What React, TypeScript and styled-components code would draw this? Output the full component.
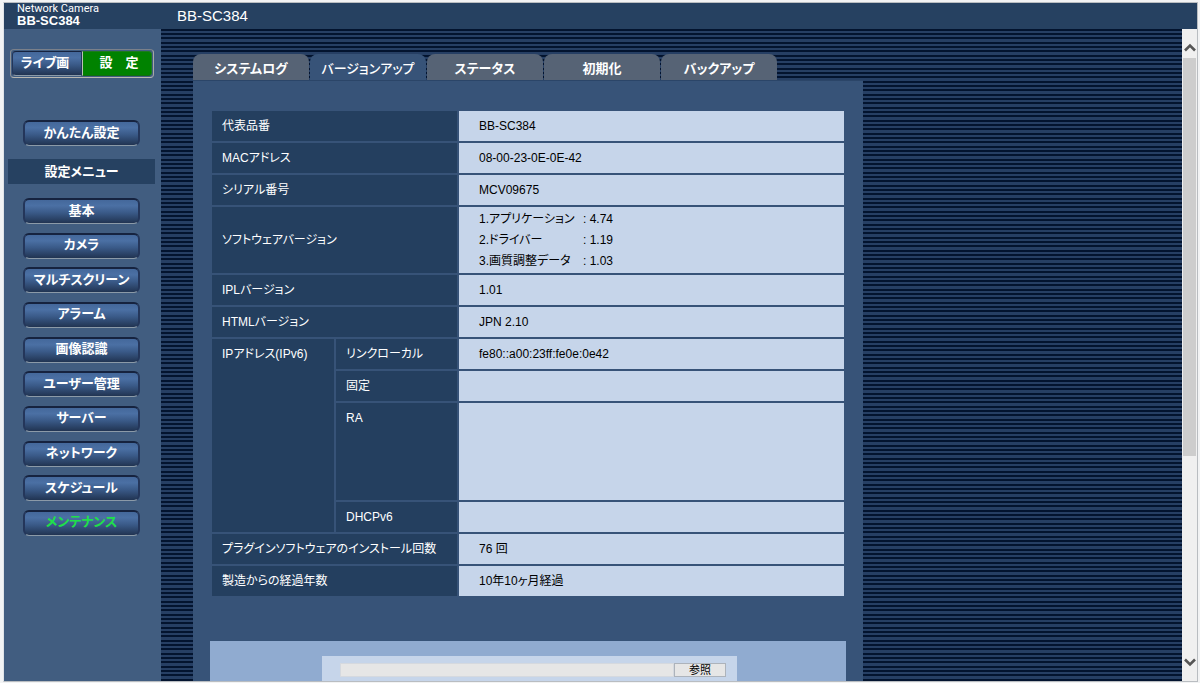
import React from "react";
import styled, { createGlobalStyle, css } from "styled-components";

const GlobalStyle = createGlobalStyle`
  *, *::before, *::after { box-sizing: border-box; }
  body {
    margin: 0;
    background: #f2f3f4;
    color: #fff;
    font: 12px/18px "Liberation Sans", "Noto Sans CJK JP", sans-serif;
    font-feature-settings: "palt";
  }
  button, input { font: inherit; font-feature-settings: inherit; }
`;

const Frame = styled.div`
  display: flex;
  flex-direction: column;
  height: 100vh;
  padding: 2px 2px 1px 3px;
`;

const Browser = styled.div`
  flex: 1;
  min-height: 0;
  display: flex;
  flex-direction: column;
  border: 1px solid #b9bdc1;
  border-left-color: #dfe3e8;
`;

const Header = styled.header`
  flex: none;
  display: flex;
  height: 26px;
  background: #264161;
`;

const Brand = styled.div`
  width: 157px;
  padding-left: 13px;
  font-family: Roboto, "Liberation Sans", sans-serif;
  font-size: 11px;
  line-height: 11px;
`;

const BrandModel = styled.strong`
  display: block;
  font-family: "Liberation Sans", sans-serif;
  font-size: 13px;
  line-height: 13px;
`;

const DeviceName = styled.h1`
  margin: 0;
  padding-left: 16px;
  font-size: 15px;
  font-weight: 400;
  line-height: 26px;
`;

const Body = styled.div`
  flex: 1;
  min-height: 0;
  display: flex;
`;

const Sidebar = styled.nav`
  flex: none;
  width: 157px;
  padding: 20px 6px 0 4px;
  background: #415d80;
  overflow: hidden;
`;

const raised = css`
  border: 1px solid;
  border-color: #16233f #24365a #8b9aa8 #24365a;
  background: linear-gradient(#44689b, #4b70a4 25%, #3a5a88 55%, #213452);
`;

const ModeSwitch = styled.div`
  display: grid;
  grid-template-columns: 1fr 1fr;
  height: 29px;
  margin: 0 1px 42px 2px;
  padding: 1px;
  border: 1px solid;
  border-color: #7a808a #a9a9a4 #b9b7b0 #8e9298;
  border-radius: 4px;
`;

const ModeButton = styled.button<{ $active?: boolean }>`
  padding: 0 4px 2px 0;
  color: #fff;
  font-size: 13px;
  font-weight: 700;
  line-height: 20px;
  white-space: pre;
  ${raised}
  border-radius: 4px 0 0 4px;
  ${(p) =>
    p.$active &&
    css`
      padding: 0 0 2px 4px;
      background: #008200;
      border-color: #1d7a1d #1d7a1d #0f6d0f #b9c3b4;
      border-radius: 0 4px 4px 0;
    `}
`;

const MenuButton = styled.button<{ $active?: boolean }>`
  display: block;
  width: 117px;
  height: 26px;
  margin: 0 auto;
  padding: 0 0 2px;
  color: ${(p) => (p.$active ? "#1fe04a" : "#fff")};
  font-size: 13px;
  font-weight: 700;
  line-height: 20px;
  ${raised}
  border-width: 2px 2px 1px;
  border-radius: 6px;
`;

const MenuTitle = styled.h2`
  margin: 13px 0 14px;
  background: #264161;
  font-size: 13px;
  font-weight: 700;
  line-height: 25px;
  text-align: center;
`;

const MenuList = styled.div`
  display: flex;
  flex-direction: column;
  justify-content: space-between;
  height: 338px;
`;

const Content = styled.main`
  flex: 1;
  min-width: 0;
  padding: 25px 32px 0;
  overflow: hidden;
  background: repeating-linear-gradient(
    #03142f 0 2px, #263f64 2px 4px,
    #03142f 4px 6px, #263f64 6px 8px,
    #03142f 8px 10px, #263f64 10px 13px
  );
`;

const Tabs = styled.div`
  display: flex;
  gap: 1px;
  max-width: 670px;
`;

const Tab = styled.button<{ $active?: boolean }>`
  width: 116px;
  height: 26px;
  padding: ${(p) => (p.$active ? "4px" : "3px")} 0 0;
  border: 0;
  border-radius: 8px 8px 0 0;
  background: ${(p) => (p.$active ? "#375378" : "#566375")};
  color: #fff;
  font-size: 13px;
  font-weight: ${(p) => (p.$active ? 500 : 700)};
  line-height: 20px;
`;

const Panel = styled.section`
  max-width: 670px;
  min-height: 900px;
  padding: 28px 17px 0;
  border-top: 1px solid #2b4568;
  background: #375378;
`;

const InfoTable = styled.table`
  width: 100%;
  border-collapse: separate;
  border-spacing: 2px;
  table-layout: fixed;
`;

const Col = styled.col<{ $width?: number }>`
  width: ${(p) => (p.$width ? `${p.$width}px` : "auto")};
`;

const Row = styled.tr<{ $height?: number }>`
  height: ${(p) => p.$height ?? 30}px;
`;

const Label = styled.th<{ $top?: boolean }>`
  padding: ${(p) => (p.$top ? "6px" : "0")} 0 0 10px;
  background: #243f5f;
  font-weight: 400;
  text-align: left;
  vertical-align: ${(p) => (p.$top ? "top" : "middle")};
  white-space: nowrap;
`;

const Value = styled.td`
  padding: 0 0 0 20px;
  background: #c6d5ea;
  color: #000;
`;

const VersionLine = styled.div`
  display: grid;
  grid-template-columns: 104px 1fr;
  line-height: 21px;
`;

const Upload = styled.div`
  min-height: 200px;
  margin-top: 43px;
  padding: 15px 109px 0 112px;
  background: #90abd0;
`;

const FileRow = styled.div`
  display: flex;
  height: 80px;
  align-items: flex-start;
  padding: 7px 11px 0 18px;
  background: #c6d5ea;
`;

const FileBox = styled.input`
  flex: 1;
  min-width: 0;
  height: 14px;
  padding: 0 4px;
  border: 1px solid #d5d9df;
  background: #e6e6e6;
`;

const BrowseButton = styled.button`
  width: 52px;
  height: 14px;
  padding: 0;
  border: 1px solid #adb3bb;
  background: #e6e6e6;
  color: #000;
  font-size: 11px;
  line-height: 11px;
`;

const Scrollbar = styled.div`
  flex: none;
  display: flex;
  flex-direction: column;
  width: 15px;
  background: #f0f0f0;
`;

const ScrollArrow = styled.button`
  display: flex;
  align-items: center;
  justify-content: center;
  height: 29px;
  padding: 8px 0 0;
  border: 0;
  background: transparent;
  &:last-child { padding: 0 0 8px; }
`;

const Track = styled.div`
  flex: 1;
  padding: 0 1px;
`;

const Thumb = styled.div`
  height: 67%;
  background: #cdcdcd;
`;

const menuItems = [
  "基本", "カメラ", "マルチスクリーン", "アラーム", "画像認識",
  "ユーザー管理", "サーバー", "ネットワーク", "スケジュール", "メンテナンス",
];
const tabs = ["システムログ", "バージョンアップ", "ステータス", "初期化", "バックアップ"];
const versions = [
  ["1.アプリケーション", ": 4.74"],
  ["2.ドライバー", ": 1.19"],
  ["3.画質調整データ", ": 1.03"],
];

function InfoRow({ label, children }: { label: string; children?: React.ReactNode }) {
  return (
    <Row>
      <Label colSpan={2} scope="row">{label}</Label>
      <Value>{children}</Value>
    </Row>
  );
}

function Chevron({ up }: { up?: boolean }) {
  return (
    <svg width="12" height="9" viewBox="0 0 12 9" fill="none" stroke="#555" strokeWidth="2.6">
      <path d={up ? "M1 7.5 6 2.5 11 7.5" : "M1 1.5 6 6.5 11 1.5"} />
    </svg>
  );
}

export default function App() {
  return (
    <Frame>
      <GlobalStyle />
      <Browser>
        <Header>
          <Brand>
            Network Camera
            <BrandModel>BB-SC384</BrandModel>
          </Brand>
          <DeviceName>BB-SC384</DeviceName>
        </Header>
        <Body>
          <Sidebar>
            <ModeSwitch>
              <ModeButton>ライブ画</ModeButton>
              <ModeButton $active>設　定</ModeButton>
            </ModeSwitch>
            <MenuButton>かんたん設定</MenuButton>
            <MenuTitle>設定メニュー</MenuTitle>
            <MenuList>
              {menuItems.map((item) => (
                <MenuButton key={item} $active={item === "メンテナンス"}>{item}</MenuButton>
              ))}
            </MenuList>
          </Sidebar>
          <Content>
            <Tabs role="tablist">
              {tabs.map((tab, i) => (
                <Tab key={tab} role="tab" aria-selected={i === 1} $active={i === 1}>{tab}</Tab>
              ))}
            </Tabs>
            <Panel>
              <InfoTable>
                <colgroup>
                  <Col $width={122} />
                  <Col $width={121} />
                  <Col />
                </colgroup>
                <tbody>
                  <InfoRow label="代表品番">BB-SC384</InfoRow>
                  <InfoRow label="MACアドレス">08-00-23-0E-0E-42</InfoRow>
                  <InfoRow label="シリアル番号">MCV09675</InfoRow>
                  <Row $height={66}>
                    <Label colSpan={2} scope="row">ソフトウェアバージョン</Label>
                    <Value>
                      {versions.map(([name, number]) => (
                        <VersionLine key={name}>
                          <span>{name}</span>
                          <span>{number}</span>
                        </VersionLine>
                      ))}
                    </Value>
                  </Row>
                  <InfoRow label="IPLバージョン">1.01</InfoRow>
                  <InfoRow label="HTMLバージョン">JPN 2.10</InfoRow>
                  <Row>
                    <Label rowSpan={4} scope="rowgroup" $top>IPアドレス(IPv6)</Label>
                    <Label scope="row">リンクローカル</Label>
                    <Value>fe80::a00:23ff:fe0e:0e42</Value>
                  </Row>
                  <Row>
                    <Label scope="row">固定</Label>
                    <Value />
                  </Row>
                  <Row $height={97}>
                    <Label scope="row" $top>RA</Label>
                    <Value />
                  </Row>
                  <Row>
                    <Label scope="row">DHCPv6</Label>
                    <Value />
                  </Row>
                  <InfoRow label="プラグインソフトウェアのインストール回数">76 回</InfoRow>
                  <InfoRow label="製造からの経過年数">10年10ヶ月経過</InfoRow>
                </tbody>
              </InfoTable>
              <Upload>
                <FileRow>
                  <FileBox type="text" aria-label="ファイル" readOnly />
                  <BrowseButton>参照</BrowseButton>
                </FileRow>
              </Upload>
            </Panel>
          </Content>
          <Scrollbar>
            <ScrollArrow aria-label="上へ"><Chevron up /></ScrollArrow>
            <Track><Thumb /></Track>
            <ScrollArrow aria-label="下へ"><Chevron /></ScrollArrow>
          </Scrollbar>
        </Body>
      </Browser>
    </Frame>
  );
}
